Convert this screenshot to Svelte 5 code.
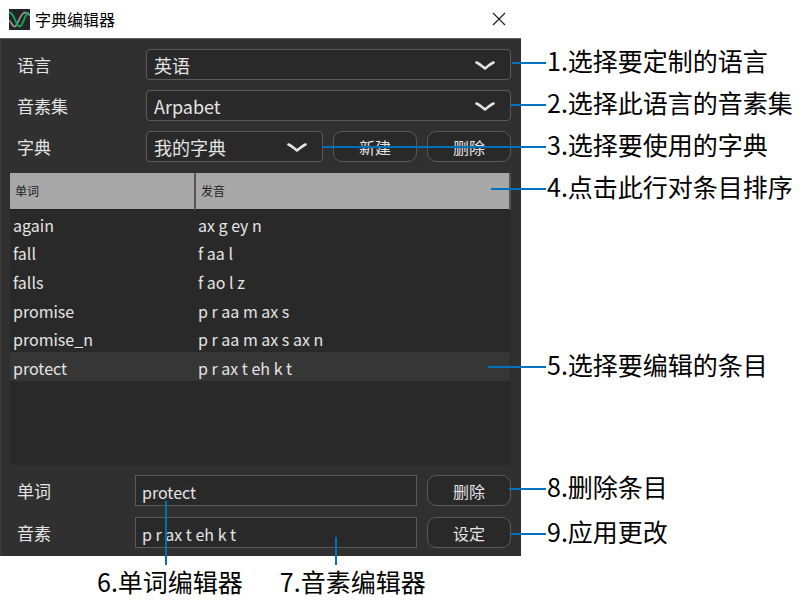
<script>
  const entries = [
    { word: 'again', phonemes: 'ax g ey n' },
    { word: 'fall', phonemes: 'f aa l' },
    { word: 'falls', phonemes: 'f ao l z' },
    { word: 'promise', phonemes: 'p r aa m ax s' },
    { word: 'promise_n', phonemes: 'p r aa m ax s ax n' },
    { word: 'protect', phonemes: 'p r ax t eh k t' }
  ];

  let sortKey = $state('word');
  let selected = $state('protect');
  let word = $state('protect');
  let phonemes = $state('p r ax t eh k t');

  const rows = $derived([...entries].sort((a, b) => (a[sortKey] < b[sortKey] ? -1 : 1)));

  function pick(entry) {
    selected = entry.word;
    word = entry.word;
    phonemes = entry.phonemes;
  }

  // reach: how far each leader line extends left of its note
  const topNotes = [
    { text: '1.选择要定制的语言', reach: 34 },
    { text: '2.选择此语言的音素集', reach: 35 },
    { text: '3.选择要使用的字典', reach: 224 },
    { text: '4.点击此行对条目排序', reach: 55 }
  ];
  const bottomNotes = [
    { text: '8.删除条目', reach: 37 },
    { text: '9.应用更改', reach: 35 }
  ];
</script>

{#snippet chevron()}
  <svg class="chevron" viewBox="0 0 20 10" aria-hidden="true">
    <path d="M1.500 1.500 C4 2.500 7 5 10 7.500 C13 5 16 2.500 18.500 1.500" />
  </svg>
{/snippet}

{#snippet note(item)}
  <p class="note"><span class="leader" style:width="{item.reach}px"></span>{item.text}</p>
{/snippet}

<div class="page">
  <div class="main">
    <section class="dialog">
      <header class="titlebar">
        <svg class="logo" viewBox="0 0 21 21" aria-hidden="true">
          <rect width="21" height="21" fill="#222426" />
          <path d="M0 11.500 C2 12 3 17.500 5.500 17.500 C9 17.500 11 3.500 16 3.500 C18.500 3.500 19 5.500 21 6" fill="none" stroke="#8d8d8d" stroke-width="1.900" />
          <path d="M0 3.500 C5.500 3 6.500 17.500 10.500 17.500 C14.500 17.500 15 4.500 20 3.500" fill="none" stroke="#18a957" stroke-width="1.900" />
        </svg>
        <h1>字典编辑器</h1>
        <button class="close" aria-label="关闭">
          <svg viewBox="0 0 14 14" aria-hidden="true"><path d="M1 1 L13 13 M13 1 L1 13" /></svg>
        </button>
      </header>

      <div class="body">
        <div class="settings">
          <div class="row">
            <label for="language">语言</label>
            <div class="select">
              <select id="language"><option>英语</option></select>
              {@render chevron()}
            </div>
          </div>
          <div class="row">
            <label for="phoneme-set">音素集</label>
            <div class="select">
              <select id="phoneme-set"><option>Arpabet</option></select>
              {@render chevron()}
            </div>
          </div>
          <div class="row">
            <label for="dictionary">字典</label>
            <div class="select">
              <select id="dictionary"><option>我的字典</option></select>
              {@render chevron()}
            </div>
            <button class="action">新建</button>
            <button class="action">删除</button>
          </div>
        </div>

        <div class="list">
          <table>
            <thead>
              <tr>
                <th class="word"><button onclick={() => (sortKey = 'word')}>单词</button></th>
                <th><button onclick={() => (sortKey = 'phonemes')}>发音</button></th>
              </tr>
            </thead>
            <tbody>
              {#each rows as entry (entry.word)}
                <tr class:selected={entry.word === selected} onclick={() => pick(entry)}>
                  <td>{entry.word}</td>
                  <td>{entry.phonemes}</td>
                </tr>
              {/each}
            </tbody>
          </table>
        </div>

        <div class="editor">
          <div class="row">
            <label for="word">单词</label>
            <input id="word" type="text" bind:value={word} />
            <button class="action">删除</button>
          </div>
          <div class="row">
            <label for="phonemes">音素</label>
            <input id="phonemes" type="text" bind:value={phonemes} />
            <button class="action">设定</button>
          </div>
        </div>
      </div>
    </section>

    <footer class="captions">
      <p class="caption"><span class="riser tall"></span>6.单词编辑器</p>
      <p class="caption"><span class="riser"></span>7.音素编辑器</p>
    </footer>
  </div>

  <aside class="notes">
    <div>
      {#each topNotes as item}{@render note(item)}{/each}
    </div>
    <div class="middle">
      {@render note({ text: '5.选择要编辑的条目', reach: 58 })}
    </div>
    <div class="bottom">
      {#each bottomNotes as item}{@render note(item)}{/each}
    </div>
  </aside>
</div>

<style>
  :global(body) {
    margin: 0;
    background: #fff;
  }

  .page,
  .page button,
  .page input,
  .page select {
    font-family: 'Noto Sans CJK SC', 'Noto Sans', sans-serif;
  }

  .page {
    display: flex;
    align-items: flex-start;
    color: #000;
  }

  .page *,
  .page *::before {
    box-sizing: border-box;
  }

  .main {
    flex: 1;
    min-width: 0;
  }

  .titlebar {
    display: flex;
    align-items: center;
    height: 38px;
    padding: 0 14px 0 9px;
    background: #fff;
  }

  .logo {
    width: 21px;
    height: 21px;
  }

  h1 {
    flex: 1;
    margin: 0 0 0 5px;
    font-size: 16px;
    font-weight: 400;
    line-height: 24px;
  }

  .close {
    display: flex;
    padding: 1px;
    border: 0;
    background: none;
  }

  .close svg {
    width: 14px;
    height: 14px;
    fill: none;
    stroke: #222;
    stroke-width: 1.2;
  }

  .body {
    padding: 10px 10px 8px 9px;
    border-top: 1px solid #5c5f5d;
    border-left: 1px solid #3c3c3c;
    background: #303030;
    color: #e4e4e4;
  }

  .settings,
  .editor {
    display: flex;
    flex-direction: column;
    gap: 10px;
  }

  .editor {
    gap: 11px;
  }

  .row {
    display: flex;
    align-items: stretch;
    gap: 10px;
    height: 31px;
  }

  label {
    width: 126px;
    padding-left: 7px;
    font-size: 17px;
    line-height: 31px;
  }

  .editor label {
    width: 115px;
  }

  .select {
    position: relative;
    flex: 1;
    min-width: 0;
  }

  select,
  input,
  .action {
    height: 100%;
    margin: 0;
    border: 1px solid #5a5a5a;
    background: #292929;
    color: #e4e4e4;
  }

  select {
    width: 100%;
    padding: 0 40px 0 7px;
    border-radius: 4px;
    appearance: none;
    font-size: 18px;
  }

  .chevron {
    position: absolute;
    top: 12px;
    right: 16px;
    width: 20px;
    height: 10px;
    fill: none;
    stroke: #e4e4e4;
    stroke-width: 2.6;
    stroke-linecap: round;
    stroke-linejoin: round;
    pointer-events: none;
  }

  input {
    flex: 1;
    min-width: 0;
    padding: 2px 6px 0;
    font-size: 16px;
  }

  .action {
    width: 84px;
    padding: 0;
    border-radius: 9px;
    font-size: 16px;
  }

  .list {
    height: 292px;
    margin: 11px 0 10px;
    background: #292929;
  }

  table {
    width: 100%;
    height: 208px;
    border-collapse: collapse;
    table-layout: fixed;
  }

  th {
    height: 36px;
    padding: 0;
    border-right: 2px solid #555;
    border-bottom: 1px solid #222;
    background: #a8a8a8;
  }

  .word {
    width: 185px;
  }

  th button {
    width: 100%;
    height: 35px;
    padding: 0 5px;
    border: 0;
    background: none;
    color: #222;
    font-size: 12px;
    text-align: left;
  }

  td {
    padding: 2px 3px 0;
    font-size: 16px;
    line-height: 24px;
  }

  .selected {
    background: #363636;
  }

  .notes {
    width: 279px;
    padding-top: 39px;
  }

  .middle {
    margin: 136px 0 80px;
  }

  .bottom {
    display: flex;
    flex-direction: column;
    gap: 3px;
  }

  .note,
  .caption {
    position: relative;
    margin: 0;
    font-size: 25px;
    white-space: nowrap;
  }

  .note {
    padding-left: 26px;
    line-height: 42px;
  }

  .leader {
    position: absolute;
    top: 23px;
    right: 254px;
    height: 2px;
    background: #0072bc;
  }

  .captions {
    display: flex;
    gap: 37px;
    padding: 7px 0 0 97px;
  }

  .caption {
    line-height: 36px;
  }

  .riser {
    position: absolute;
    bottom: 34px;
    left: 55px;
    width: 2px;
    height: 28px;
    background: #0072bc;
  }

  .tall {
    left: 68px;
    height: 64px;
  }
</style>
